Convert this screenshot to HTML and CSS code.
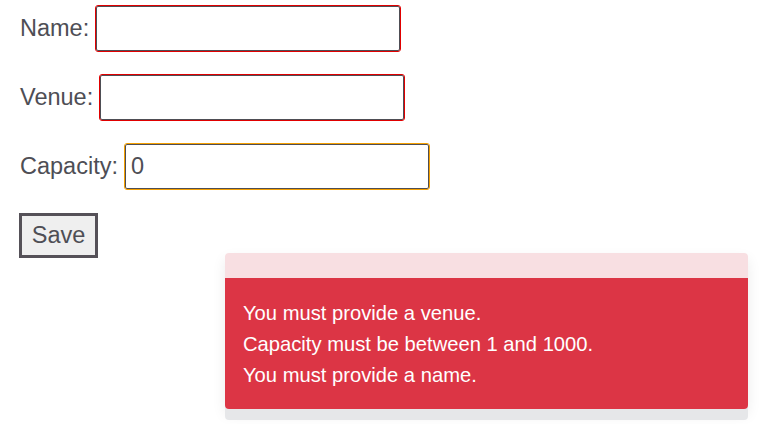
FILE: index.html
```html
<!DOCTYPE html>
<html>
<head>
<meta charset="utf-8">
<link rel="stylesheet" href="styles.css">
</head>
<body>
<form class="form">
  <div class="row">
    <label class="label">Name:</label>
    <input class="field invalid" type="text" value="">
  </div>
  <div class="row">
    <label class="label">Venue:</label>
    <input class="field invalid" type="text" value="">
  </div>
  <div class="row">
    <label class="label">Capacity:</label>
    <input class="field warn" type="text" value="0">
  </div>
  <div class="row">
    <button class="save" type="button">Save</button>
  </div>
</form>
<div class="toast">
  <div class="toast-header"></div>
  <div class="toast-body">
    <div class="msg">You must provide a venue.</div>
    <div class="msg">Capacity must be between 1 and 1000.</div>
    <div class="msg">You must provide a name.</div>
  </div>
</div>
</body>
</html>
```
FILE: styles.css
```css
html, body {
  margin: 0;
  padding: 0;
  background: #fff;
  width: 761px;
  height: 424px;
  overflow: hidden;
  font-family: "Liberation Sans", Arial, sans-serif;
  position: relative;
}
.form {
  padding: 5px 0 0 19px;
  display: flex;
  flex-direction: column;
  gap: 22px;
}
.row {
  display: flex;
  align-items: center;
  gap: 6px;
  height: 47px;
}
.label {
  font-size: 23.5px;
  color: #4e4e55;
  padding-left: 1px;
}
.field {
  box-sizing: border-box;
  width: 304px;
  height: 45px;
  margin: 1px;
  border: 1px solid #4e4e55;
  border-radius: 2px;
  padding: 0 5px;
  font-family: "Liberation Sans", Arial, sans-serif;
  font-size: 23.5px;
  color: #4e4e55;
  background: #fff;
}
.invalid { outline: 1px solid #e00000; }
.warn { outline: 1px solid #f5a000; }
.save {
  box-sizing: border-box;
  height: 45px;
  width: 79px;
  border: 3px solid #555158;
  background: #efefef;
  font-family: "Liberation Sans", Arial, sans-serif;
  font-size: 23.5px;
  color: #4e4e55;
  padding: 0;
}
.toast {
  position: absolute;
  left: 225px;
  top: 253px;
  width: 523px;
  border-radius: 4px;
  overflow: hidden;
  box-shadow: 0 11px 0 #e6e7e9, 0 6px 14px rgba(0,0,0,0.08);
}
.toast-header {
  height: 25px;
  background: #f8dfe2;
}
.toast-body {
  background: #dc3545;
  color: #fff;
  font-size: 20.2px;
  line-height: 31px;
  padding: 20px 17px 18px 18px;
}
```
